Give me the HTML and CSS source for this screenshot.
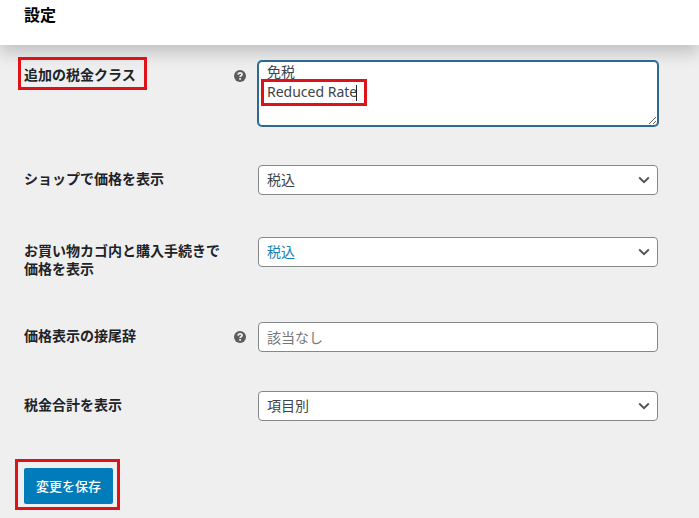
FILE: index.html
```html
<!DOCTYPE html>
<html lang="ja">
<head>
<meta charset="utf-8">
<meta name="viewport" content="width=device-width, initial-scale=1">
<title>設定</title>
<link rel="stylesheet" href="styles.css">
</head>
<body>
<header class="page-header"><h1>設定</h1></header>
<main>
<form class="settings">
  <div class="row">
    <div class="label-cell">
      <label class="marked" for="tax-classes">追加の税金クラス</label>
      <svg class="help" viewBox="0 0 12 12" aria-hidden="true"><circle cx="6" cy="6" r="6"/><path d="M4.1 4.6C4.2 3.4 5 2.9 6.1 2.9S8 3.5 8 4.5C8 5.8 6.1 5.8 6.1 7.1M6.1 8.1V9.7"/></svg>
    </div>
    <div class="control text-area">
      <textarea id="tax-classes" spellcheck="false">免税
Reduced Rate</textarea>
      <span class="line-mark"></span>
    </div>
  </div>
  <div class="row">
    <div class="label-cell"><label for="shop-prices">ショップで価格を表示</label></div>
    <div class="control dropdown">
      <select id="shop-prices"><option>税込</option></select>
      <svg class="chevron" viewBox="0 0 12 8" aria-hidden="true"><path d="M1.2 1.5 6 6.2l4.8-4.7"/></svg>
    </div>
  </div>
  <div class="row">
    <div class="label-cell"><label for="cart-prices">お買い物カゴ内と購入手続きで価格を表示</label></div>
    <div class="control dropdown">
      <select id="cart-prices" class="hovered"><option>税込</option></select>
      <svg class="chevron" viewBox="0 0 12 8" aria-hidden="true"><path d="M1.2 1.5 6 6.2l4.8-4.7"/></svg>
    </div>
  </div>
  <div class="row">
    <div class="label-cell">
      <label for="suffix">価格表示の接尾辞</label>
      <svg class="help" viewBox="0 0 12 12" aria-hidden="true"><circle cx="6" cy="6" r="6"/><path d="M4.1 4.6C4.2 3.4 5 2.9 6.1 2.9S8 3.5 8 4.5C8 5.8 6.1 5.8 6.1 7.1M6.1 8.1V9.7"/></svg>
    </div>
    <div class="control"><input id="suffix" type="text" placeholder="該当なし"></div>
  </div>
  <div class="row">
    <div class="label-cell"><label for="tax-totals">税金合計を表示</label></div>
    <div class="control dropdown">
      <select id="tax-totals"><option>項目別</option></select>
      <svg class="chevron" viewBox="0 0 12 8" aria-hidden="true"><path d="M1.2 1.5 6 6.2l4.8-4.7"/></svg>
    </div>
  </div>
  <div class="submit"><button type="submit">変更を保存</button></div>
</form>
</main>
</body>
</html>
```
FILE: styles.css
```css
* { box-sizing: border-box; }
body {
  margin: 0;
  background: #efefef;
  color: #1d2327;
  font: 14px/18px "Noto Sans", "Noto Sans CJK JP", sans-serif;
}
.page-header {
  padding: 5px 24px 20px;
  background: #fff;
  box-shadow: 0 8px 16px rgba(85, 90, 95, 0.3);
}
h1 {
  margin: 0;
  color: #000;
  font-size: 16px;
  line-height: 20px;
  font-weight: 700;
}
.settings {
  display: flex;
  flex-direction: column;
  gap: 39px;
  padding: 16px 41px 14px 24px;
}
.row {
  display: grid;
  grid-template-columns: 224px 1fr;
  gap: 10px;
}
.label-cell {
  display: flex;
  justify-content: space-between;
  align-items: flex-start;
  padding: 5px 0;
}
label {
  position: relative;
  max-width: 200px;
  font-weight: 700;
}
.marked::after {
  content: "";
  position: absolute;
  inset: -9px -11px -6px -6px;
  border: 3px solid #de1218;
}
.help {
  width: 12px;
  height: 12px;
  margin: 4px 2px 0 0;
  fill: #5c5c5c;
}
.help path {
  fill: none;
  stroke: #efefef;
  stroke-width: 1.8;
}
.control { position: relative; }
.dropdown { padding-bottom: 3px; }
textarea, select, input {
  display: block;
  width: 100%;
  height: 30px;
  margin: 0;
  padding: 0 8px;
  border: 1px solid #85888b;
  border-radius: 4px;
  background: #fff;
  color: #3c434a;
  font: inherit;
  appearance: none;
  outline: none;
}
textarea {
  height: 65px;
  border-color: #2c6a93;
  box-shadow: 0 0 0 1px #2c6a93;
  line-height: 20px;
  resize: vertical;
}
.line-mark {
  position: absolute;
  top: 18px;
  left: 3px;
  width: 106px;
  height: 27px;
  border: 3px solid #de1218;
  pointer-events: none;
}
.line-mark::after {
  content: "";
  position: absolute;
  top: 3px;
  right: 7px;
  width: 1px;
  height: 16px;
  background: #1d2327;
}
.hovered { color: #1683b3; }
input::placeholder {
  color: #757575;
  opacity: 1;
}
.chevron {
  position: absolute;
  top: 11px;
  right: 8px;
  width: 12px;
  height: 8px;
  fill: none;
  stroke: #50565b;
  stroke-width: 2;
  pointer-events: none;
}
.submit {
  align-self: flex-start;
  position: relative;
  margin-top: 5px;
}
.submit::after {
  content: "";
  position: absolute;
  inset: -9px -7px -6px -9px;
  border: 3px solid #de1218;
  pointer-events: none;
}
button {
  display: block;
  height: 36px;
  padding: 0 12px;
  border: 0;
  border-radius: 2px;
  background: #007cba;
  color: #fff;
  font: inherit;
  font-family: "Noto Sans CJK JP", sans-serif;
  font-size: 13px;
  font-weight: 500;
}
```
